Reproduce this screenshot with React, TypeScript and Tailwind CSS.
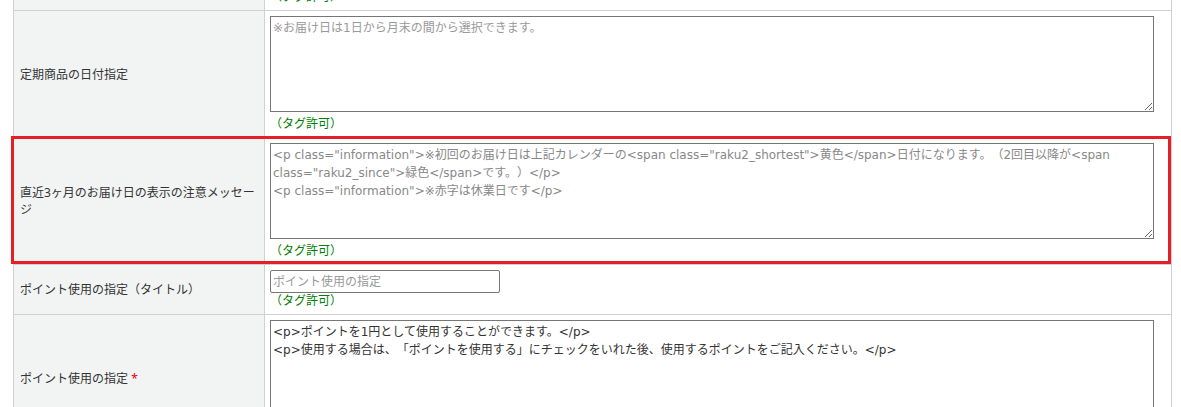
import React from 'react';

const TagNote = () => (
  <div className="mt-[4px] leading-[16px] text-[#008000]">（タグ許可）</div>
);

const Row = ({
  label,
  children,
  highlight = false,
}: {
  label: React.ReactNode;
  children: React.ReactNode;
  highlight?: boolean;
}) => (
  <div className="relative grid grid-cols-[251px_1fr] border-b border-[#d0d0d0]">
    <div className="flex items-center border-r border-[#d0d0d0] bg-[#f2f3f3] pl-[6px] pr-[6px] leading-[17px] text-[#333]">
      {label}
    </div>
    <div className="pt-[5px] pb-[5px] pl-[5px]">{children}</div>
    {highlight && (
      <div className="pointer-events-none absolute -top-[2px] -left-[3px] right-0 bottom-0 border-[3px] border-[#e61e25]" />
    )}
  </div>
);

// textarea text uses a Verdana-like latin face, close to the original's Meiryo
const textareaBase =
  "block h-[96px] w-[884px] border border-[#767676] px-[2px] py-[2px] font-['DejaVu_Sans','Noto_Sans_CJK_JP',sans-serif] leading-[18px] outline-none";

export default function App() {
  return (
    <div className="h-screen overflow-hidden bg-white font-['Noto_Sans','Noto_Sans_CJK_JP',sans-serif] text-[12px] text-[#333] [text-spacing-trim:space-all]">
      <div className="ml-[13px] -mt-[116px] w-[1159px] border-x border-[#d0d0d0]">
        <Row label="">
          <textarea className={textareaBase} defaultValue="" />
          <TagNote />
        </Row>

        <Row label="定期商品の日付指定">
          <textarea
            className={`${textareaBase} placeholder:text-[#999]`}
            placeholder="※お届け日は1日から月末の間から選択できます。"
          />
          <TagNote />
        </Row>

        <Row label="直近3ヶ月のお届け日の表示の注意メッセージ" highlight>
          <textarea
            className={`${textareaBase} text-[#888]`}
            defaultValue={
              '<p class="information">※初回のお届け日は上記カレンダーの<span class="raku2_shortest">黄色</span>日付になります。（2回目以降が<span class="raku2_since">緑色</span>です。）</p>\n<p class="information">※赤字は休業日です</p>'
            }
          />
          <TagNote />
        </Row>

        <Row label="ポイント使用の指定（タイトル）">
          <input
            className="block h-[23px] w-[230px] rounded-[2px] border border-[#767676] px-[2px] outline-none placeholder:text-[#999]"
            placeholder="ポイント使用の指定"
          />
          <div className="leading-[16px] text-[#008000]">（タグ許可）</div>
        </Row>

        <Row
          label={
            <span>
              ポイント使用の指定 <span className="text-[#e60012]">*</span>
            </span>
          }
        >
          <textarea
            className={`${textareaBase} text-[#333]`}
            defaultValue={
              '<p>ポイントを1円として使用することができます。</p>\n<p>使用する場合は、「ポイントを使用する」にチェックをいれた後、使用するポイントをご記入ください。</p>'
            }
          />
          <TagNote />
        </Row>
      </div>
    </div>
  );
}
